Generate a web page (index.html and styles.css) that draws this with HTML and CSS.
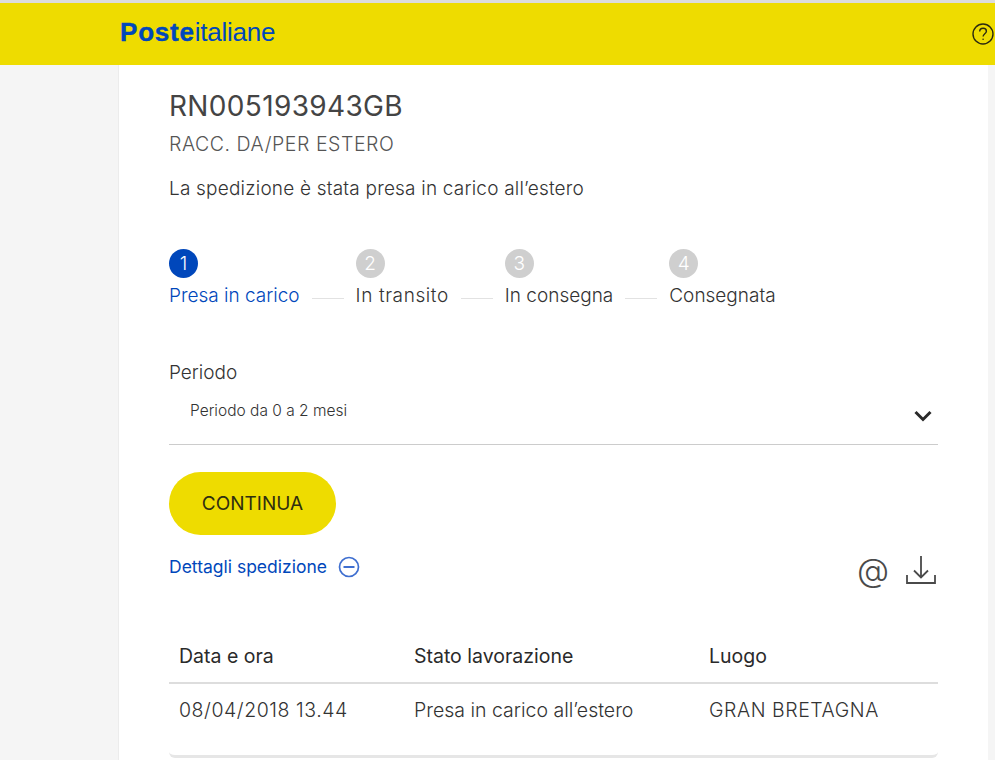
FILE: index.html
```html
<!DOCTYPE html>
<html lang="it">
<head>
<meta charset="utf-8">
<title>Poste Italiane</title>
<link rel="stylesheet" href="styles.css">
</head>
<body>
<header class="topbar">
  <div class="logo"><b>Poste</b>italiane</div>
  <svg class="help" viewBox="0 0 22 22" width="22" height="22" fill="none" stroke="#2b2a10" stroke-width="1.4">
    <circle cx="11" cy="11" r="10"/>
    <path d="M7.7 8.6c0-2 1.5-3.3 3.4-3.3s3.3 1.2 3.3 2.9c0 2.500-3.300 2.600-3.300 5.300"/>
    <circle cx="11.100" cy="16.300" r=".8" fill="#2b2a10" stroke="none"/>
  </svg>
</header>
<main class="card">
  <h1 class="code">RN005193943GB</h1>
  <p class="kind">RACC. DA/PER ESTERO</p>
  <p class="status">La spedizione è stata presa in carico all’estero</p>

  <ol class="steps">
    <li class="step active"><span class="num">1</span><span class="label">Presa in carico</span></li>
    <li class="link"></li>
    <li class="step"><span class="num">2</span><span class="label wide">In transito</span></li>
    <li class="link"></li>
    <li class="step"><span class="num">3</span><span class="label">In consegna</span></li>
    <li class="link"></li>
    <li class="step"><span class="num">4</span><span class="label">Consegnata</span></li>
  </ol>

  <div class="period-label">Periodo</div>
  <div class="select">
    <span>Periodo da 0 a 2 mesi</span>
    <svg viewBox="0 0 18 12" width="18" height="12" fill="none" stroke="#2a2a2a" stroke-width="3">
      <path d="M1.500 2l7.500 7.500L16.500 2"/>
    </svg>
  </div>

  <button class="cta" type="button">CONTINUA</button>

  <div class="tools">
    <div class="details">
      <span>Dettagli spedizione</span>
      <svg viewBox="0 0 22 22" width="22" height="22" fill="none" stroke="#3f6fd0" stroke-width="1.700">
        <circle cx="11" cy="11" r="9.500"/>
        <path d="M5.500 11h11" stroke-width="2"/>
      </svg>
    </div>
    <div class="actions">
      <span class="at">@</span>
      <svg viewBox="0 0 30 30" width="30" height="30" fill="none" stroke="#4a4a4a" stroke-width="1.800">
        <path d="M15 1v21M8 15.500l7 7 7-7"/>
        <path d="M1 20v8h28v-8"/>
      </svg>
    </div>
  </div>

  <div class="table">
    <div class="row head"><span>Data e ora</span><span>Stato lavorazione</span><span>Luogo</span></div>
    <div class="row body"><span class="wide">08/04/2018 13.44</span><span>Presa in carico all’estero</span><span class="wide">GRAN BRETAGNA</span></div>
  </div>
</main>
</body>
</html>
```
FILE: styles.css
```css
* { box-sizing: border-box; }
html, body { margin: 0; height: 760px; overflow: hidden; }
body {
  background: #f5f5f5;
  border-top: 3px solid #dcdcdc;
  font-family: Inter, "Liberation Sans", sans-serif;
  font-weight: 300;
  color: #333;
}
.topbar {
  height: 62px;
  background: #eedc00;
  display: flex;
  align-items: flex-start;
  justify-content: space-between;
  padding: 15px 1px 0 120px;
}
.logo {
  font-family: "Liberation Sans", sans-serif;
  font-size: 26px;
  line-height: 28px;
  color: #0047bb;
  letter-spacing: -0.25px;
  font-weight: 400;
}
.logo b { font-weight: 700; letter-spacing: 0.8px; -webkit-text-stroke: 0.4px #0047bb; }
.help { margin-top: 5px; }
.card {
  width: 870px;
  height: 695px;
  margin-left: 118px;
  padding: 23px 50px 0 50px;
  background: #fff;
  border-left: 1px solid #ececec;
}
.code {
  margin: 0;
  font-size: 28px;
  line-height: 36px;
  font-weight: 400;
  color: #444;
  letter-spacing: 0.35px;
}
.kind {
  margin: 8px 0 0;
  font-size: 19.5px;
  line-height: 24px;
  color: #555;
  letter-spacing: 0.55px;
}
.status {
  margin: 21px 0 0;
  font-size: 19px;
  line-height: 24px;
  color: #333;
  letter-spacing: 0.2px;
}
.steps {
  list-style: none;
  margin: 48px 0 0;
  padding: 0;
  display: flex;
  align-items: flex-start;
}
.step { display: flex; flex-direction: column; align-items: flex-start; }
.num {
  width: 29px;
  height: 29px;
  border-radius: 50%;
  background: #cfcfcf;
  color: #fff;
  font-size: 19px;
  line-height: 29px;
  text-align: center;
}
.label { margin-top: 6px; font-size: 19px; line-height: 24px; white-space: nowrap; }
.label.wide { letter-spacing: 0.6px; }
.active .num { background: #0047bb; }
.active .label { color: #0047bb; }
.link { width: 32px; height: 1px; background: #e2e2e2; margin: 49px 12px 0; }
.period-label { margin-top: 53px; font-size: 19px; line-height: 24px; }
.select {
  height: 60px;
  padding: 16px 6px 0 21px;
  display: flex;
  justify-content: space-between;
  font-size: 15.5px;
  line-height: 20px;
  border-bottom: 1px solid #ccc;
}
.select svg { margin-top: 9px; }
.cta {
  display: block;
  width: 167px;
  height: 63px;
  margin-top: 27px;
  padding: 0;
  border: 0;
  border-radius: 32px;
  background: #eedc00;
  color: #2e2e10;
  font: 400 19px Inter, "Liberation Sans", sans-serif;
}
.tools { display: flex; justify-content: space-between; align-items: flex-start; margin-top: 20px; }
.details {
  display: flex;
  align-items: center;
  gap: 11px;
  color: #0047bb;
  font-size: 17.5px;
  line-height: 24px;
  font-weight: 400;
}
.actions { display: flex; align-items: center; gap: 17px; padding-right: 2px; }
.at { font-size: 33px; line-height: 30px; color: #4a4a4a; }
.table { margin-top: 57px; border-bottom: 3px solid #e6e6e6; border-radius: 0 0 6px 6px; height: 116px; }
.row { display: grid; grid-template-columns: 235px 295px 1fr; padding-left: 10px; font-size: 19.5px; line-height: 24px; }
.row .wide { letter-spacing: 0.55px; }
.head { height: 42px; padding-top: 2px; font-weight: 400; border-bottom: 2px solid #ddd; color: #2a2a2a; }
.body { padding-top: 14px; }
```
